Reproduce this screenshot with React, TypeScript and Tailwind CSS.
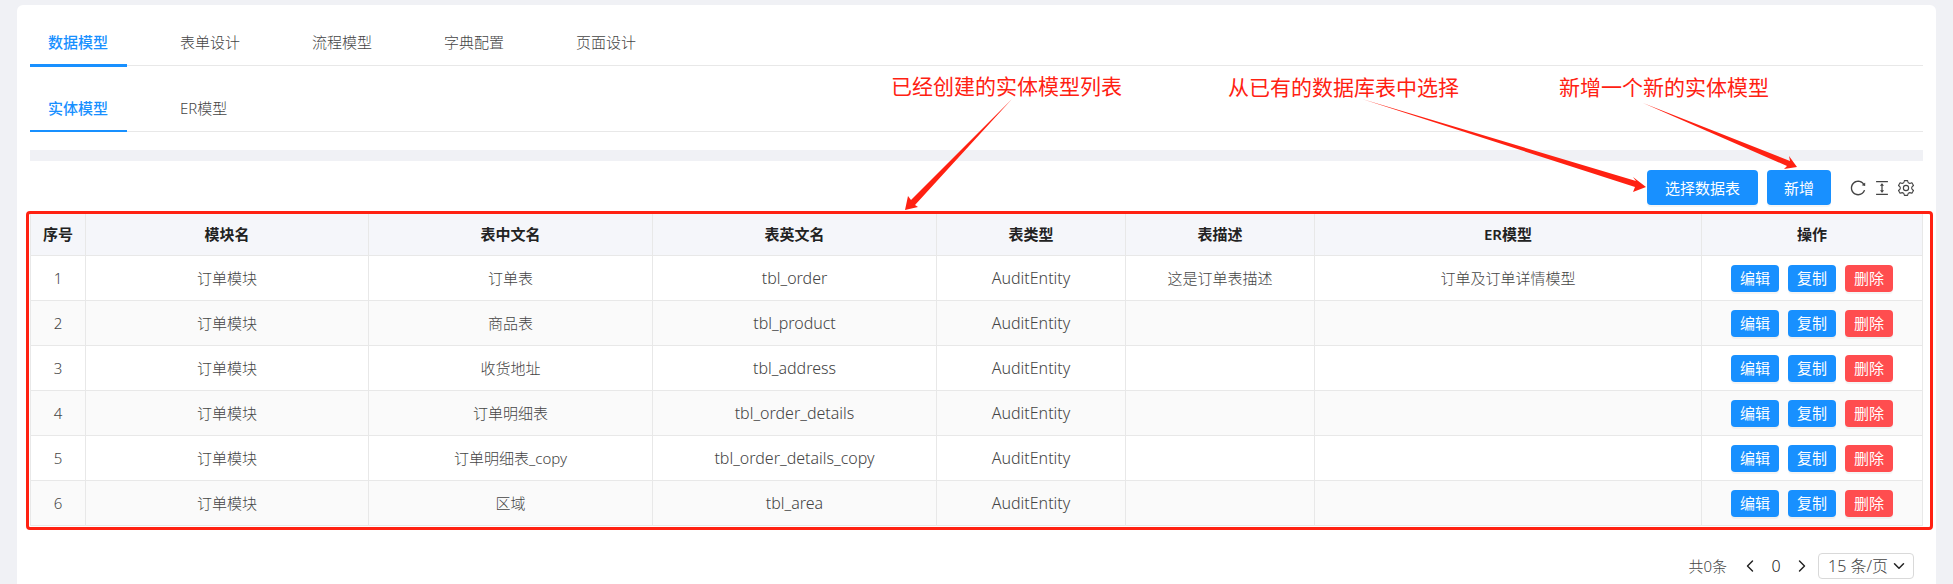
import { Fragment } from "react";
import { ChevronDown, ChevronLeft, ChevronRight } from "lucide-react";
import clsx from "clsx";

type EntityRow = {
  module: string;
  label: string;
  table: string;
  type: string;
  description?: string;
  erModel?: string;
};

const mainTabs = ["数据模型", "表单设计", "流程模型", "字典配置", "页面设计"];
const modelTabs = ["实体模型", "ER模型"];

const columns = [
  { title: "序号", width: 55 },
  { title: "模块名", width: 283 },
  { title: "表中文名", width: 284 },
  { title: "表英文名", width: 284 },
  { title: "表类型", width: 189 },
  { title: "表描述", width: 189 },
  { title: "ER模型", width: 387 },
  { title: "操作", width: 221 },
];

const totalWidth = columns.reduce((sum, column) => sum + column.width, 0);

const rows: EntityRow[] = [
  {
    module: "订单模块",
    label: "订单表",
    table: "tbl_order",
    type: "AuditEntity",
    description: "这是订单表描述",
    erModel: "订单及订单详情模型",
  },
  { module: "订单模块", label: "商品表", table: "tbl_product", type: "AuditEntity" },
  { module: "订单模块", label: "收货地址", table: "tbl_address", type: "AuditEntity" },
  { module: "订单模块", label: "订单明细表", table: "tbl_order_details", type: "AuditEntity" },
  { module: "订单模块", label: "订单明细表_copy", table: "tbl_order_details_copy", type: "AuditEntity" },
  { module: "订单模块", label: "区域", table: "tbl_area", type: "AuditEntity" },
];

function Tabs({ items, thick }: { items: string[]; thick?: boolean }) {
  return (
    <nav className="flex h-[50px] gap-[35px] border-b border-[#e8e8e8]">
      {items.map((item, index) => (
        <button
          key={item}
          className={clsx(
            "relative flex min-w-[97px] items-center px-[18px] pt-[3px]",
            index === 0 && "font-medium text-[#1890ff]",
          )}
        >
          {item}
          {index === 0 && (
            <span className={clsx("absolute inset-x-0 bg-[#1890ff]", thick ? "-bottom-[2px] h-[3px]" : "-bottom-px h-[2px]")} />
          )}
        </button>
      ))}
    </nav>
  );
}

function ReloadIcon() {
  return (
    <svg className="size-[18px]" viewBox="0 0 1024 1024" fill="currentColor">
      <path d="M909.1 209.3l-56.4 44.1C775.8 155.1 656.2 92 521.9 92 290 92 102.3 279.5 102 511.5 101.7 743.7 289.8 932 521.9 932c181.3 0 335.8-115 394.6-276.1 1.5-4.2-.7-8.9-4.9-10.3l-56.7-19.5a8 8 0 0 0-10.1 4.8c-1.8 5-3.8 10-5.9 14.9-17.3 41-42.1 77.8-73.7 109.4A344.77 344.77 0 0 1 655.9 829c-42.3 17.9-87.4 27-133.8 27-46.5 0-91.5-9.1-133.8-27A341.5 341.5 0 0 1 279 755.2a342.16 342.16 0 0 1-73.7-109.4c-17.9-42.4-27-87.4-27-133.9s9.1-91.5 27-133.9c17.3-41 42.1-77.8 73.7-109.4 31.6-31.6 68.4-56.4 109.3-73.8 42.3-17.9 87.4-27 133.8-27 46.5 0 91.5 9.1 133.8 27a341.5 341.5 0 0 1 109.3 73.8c9.9 9.9 19.2 20.4 27.8 31.4l-60.2 47a8 8 0 0 0 3 14.1l175.6 43c5 1.2 9.9-2.6 9.9-7.7l.8-180.9c-.1-6.6-7.8-10.3-13-6.2z" />
    </svg>
  );
}

function DensityIcon() {
  return (
    <svg className="size-[18px]" viewBox="0 0 1024 1024" fill="currentColor">
      <path d="M840 836H184c-4.400 0-8 3.600-8 8v60c0 4.400 3.600 8 8 8h656c4.400 0 8-3.600 8-8v-60c0-4.400-3.600-8-8-8zm0-724H184c-4.400 0-8 3.600-8 8v60c0 4.400 3.600 8 8 8h656c4.400 0 8-3.600 8-8v-60c0-4.400-3.600-8-8-8zM610.800 378c6 0 9.400-7 5.700-11.700L515.700 238.700a7.140 7.140 0 0 0-11.300 0L403.600 366.300a7.230 7.230 0 0 0 5.700 11.700H476v268h-62.800c-6 0-9.400 7-5.700 11.700l100.800 127.500c2.900 3.700 8.500 3.700 11.300 0l100.800-127.500c3.700-4.700.4-11.700-5.700-11.700H548V378h62.800z" />
    </svg>
  );
}

function SettingIcon() {
  return (
    <svg className="size-[18px]" viewBox="0 0 24 24" fill="none" stroke="currentColor" strokeWidth="1.5">
      <path
        strokeLinejoin="round"
        d="M9.600 3.200 9.900 2.200h4.200l.3 1 .6 1.700 1.600.9 1.800-.3 1.500-.5 2.100 3.600-1.200 1-1.100 1.400v2l1.100 1.400 1.200 1-2.100 3.600-1.500-.5-1.800-.3-1.600.9-.6 1.700-.3 1H9.900l-.3-1-.6-1.700-1.600-.9-1.800.3-1.500.5L2 15.400l1.200-1L4.300 13v-2L3.200 9.600 2 8.600 4.100 5l1.500.5 1.800.3L9 4.900z"
      />
      <circle cx="12" cy="12" r="3.500" />
    </svg>
  );
}

function ActionButton({ label, danger }: { label: string; danger?: boolean }) {
  return (
    <button
      className={clsx(
        "h-[27px] w-12 rounded-[4px] font-normal text-white shadow-[0_2px_0_rgba(0,0,0,0.04)]",
        danger ? "bg-[#ff4d4f]" : "bg-[#1890ff]",
      )}
    >
      {label}
    </button>
  );
}

function EntityTable() {
  return (
    <div className="relative">
      <table className="w-full table-fixed border-separate border-spacing-0 border-l border-[#e8e8e8] text-center">
        <colgroup>
          {columns.map((column) => (
            <col key={column.title} style={{ width: `${(column.width / totalWidth) * 100}%` }} />
          ))}
        </colgroup>
        <thead>
          <tr className="h-[43px] bg-[#f5f6fa] text-[#222]">
            {columns.map((column) => (
              <th key={column.title} className="border-r border-b border-[#e8e8e8] font-semibold">
                {column.title}
              </th>
            ))}
          </tr>
        </thead>
        <tbody>
          {rows.map((row, index) => (
            <tr key={row.table} className="h-[45px] even:bg-[#fafafa]">
              <td className="border-r border-b border-[#e8e8e8]">{index + 1}</td>
              <td className="border-r border-b border-[#e8e8e8]">{row.module}</td>
              <td className="border-r border-b border-[#e8e8e8]">{row.label}</td>
              <td className="border-r border-b border-[#e8e8e8] text-base">{row.table}</td>
              <td className="border-r border-b border-[#e8e8e8] text-base">{row.type}</td>
              <td className="border-r border-b border-[#e8e8e8]">{row.description}</td>
              <td className="border-r border-b border-[#e8e8e8]">{row.erModel}</td>
              <td className="border-r border-b border-[#e8e8e8]">
                <div className="flex justify-center gap-[9px]">
                  <ActionButton label="编辑" />
                  <ActionButton label="复制" />
                  <ActionButton label="删除" danger />
                </div>
              </td>
            </tr>
          ))}
        </tbody>
      </table>
      <div className="pointer-events-none absolute -top-[2px] -right-[10px] -bottom-1 -left-1 rounded-[4px] border-[3px] border-[#ff2112]" />
    </div>
  );
}

const notes = [
  {
    text: "已经创建的实体模型列表",
    place: "left-[891px] top-[71px]",
    arrow: "left-[900px] top-[95px]",
    width: 120,
    height: 120,
    points: "112,4 15,110 18,112 5,115 8,101 11,105",
  },
  {
    text: "从已有的数据库表中选择",
    place: "right-[494px] top-[72px]",
    arrow: "right-[303px] top-[95px]",
    width: 300,
    height: 100,
    points: "12,4 286,86 283,82 296,92 283,97 285,92",
  },
  {
    text: "新增一个新的实体模型",
    place: "right-[184px] top-[72px]",
    arrow: "right-[151px] top-[100px]",
    width: 165,
    height: 72,
    points: "6,3 153,61 152,56 160,67 147,69 150,66",
  },
];

function Notes() {
  return (
    <>
      {notes.map((note) => (
        <Fragment key={note.text}>
          <p className={clsx("absolute text-[21px] leading-[30px] font-normal whitespace-nowrap text-[#ff2112]", note.place)}>
            {note.text}
          </p>
          <svg
            className={clsx("pointer-events-none absolute", note.arrow)}
            width={note.width}
            height={note.height}
            fill="#ff2112"
          >
            <polygon points={note.points} />
          </svg>
        </Fragment>
      ))}
    </>
  );
}

export default function App() {
  return (
    <div className="relative min-h-screen bg-[#f0f1f5] pt-[5px] pr-[17px] pl-[17px] font-['Noto_Sans','Noto_Sans_CJK_SC',sans-serif] text-[15px] leading-6 font-light text-[#444]">
      <main className="min-h-[calc(100vh-5px)] rounded-t-md bg-white px-[13px] pt-[11px]">
        <Tabs items={mainTabs} thick />
        <div className="mt-4">
          <Tabs items={modelTabs} />
        </div>
        <div className="mt-[18px] h-[11px] bg-[#f0f1f5]" />

        <div className="flex items-center justify-end gap-[9px] pt-[9px] pr-[8px] pb-2">
          <button className="h-[35px] rounded-[4px] bg-[#1890ff] px-[18px] font-normal text-white shadow-[0_2px_0_rgba(0,0,0,0.04)]">
            选择数据表
          </button>
          <button className="h-[35px] rounded-[4px] bg-[#1890ff] px-[17px] font-normal text-white shadow-[0_2px_0_rgba(0,0,0,0.04)]">
            新增
          </button>
          <div className="ml-[9px] flex gap-[6px]">
            <button aria-label="刷新">
              <ReloadIcon />
            </button>
            <button aria-label="密度">
              <DensityIcon />
            </button>
            <button aria-label="列设置">
              <SettingIcon />
            </button>
          </div>
        </div>

        <EntityTable />

        <footer className="flex items-center justify-end pt-[27px] pr-[9px] pb-[4px]">
          <span>共0条</span>
          <button aria-label="上一页" className="ml-[13px] text-[#222]">
            <ChevronLeft className="size-5" strokeWidth={1.7} />
          </button>
          <span className="w-8 text-center text-base text-[#222]">0</span>
          <button aria-label="下一页" className="text-[#222]">
            <ChevronRight className="size-5" strokeWidth={1.7} />
          </button>
          <div className="relative ml-[6px]">
            <select
              aria-label="每页条数"
              className="block h-[26px] w-24 appearance-none rounded-[4px] border border-[#d9d9d9] bg-white pl-[9px] text-base leading-6"
            >
              <option>15 条/页</option>
              <option>30 条/页</option>
            </select>
            <ChevronDown className="pointer-events-none absolute top-1 right-[6px] size-[18px] text-[#222]" strokeWidth={2} />
          </div>
        </footer>
      </main>
      <Notes />
    </div>
  );
}
